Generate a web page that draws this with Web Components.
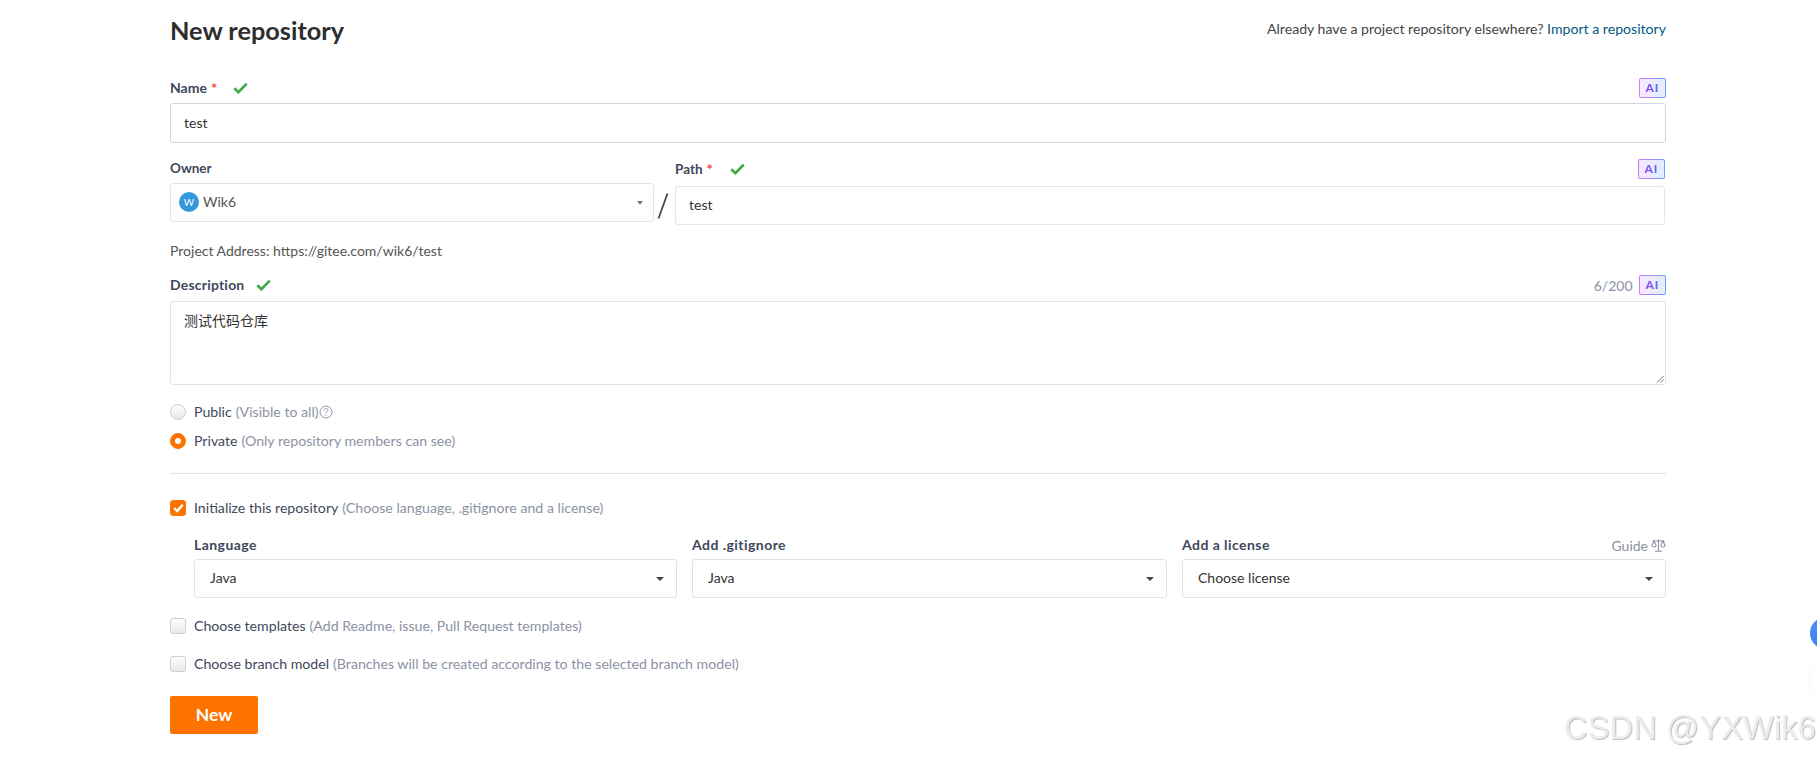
<!DOCTYPE html>
<html lang="en">
<head>
<meta charset="utf-8">
<title>New repository</title>
<style>
html,body{margin:0;padding:0;height:761px;overflow:hidden;background:#fff}
body{font-family:Lato,"Noto Sans CJK SC","Liberation Sans",sans-serif;font-size:14px;color:#40485b}
</style>
</head>
<body>
<repo-page></repo-page>
<script>
const def=(name,css,html)=>{
  customElements.define(name,class extends HTMLElement{
    constructor(){super();const r=this.attachShadow({mode:'open'});r.innerHTML=`<style>${css}</style>${typeof html==='function'?html(this):html}`;}
  });
};
const FONT='font-family:Lato,"Noto Sans CJK SC","Liberation Sans",sans-serif;';

def('ok-mark',`:host{display:inline-flex;width:15px;height:12px}svg{width:15px;height:12px;display:block}`,
`<svg viewBox="0 0 15 12"><path d="M1.3 6.2 5.4 10.2 13.7 1.6" fill="none" stroke="#3fab4a" stroke-width="2.7"/></svg>`);

def('ai-badge',`:host{display:inline-flex;align-items:center;justify-content:center;box-sizing:border-box;width:27.5px;height:20px;border:1px solid transparent;border-radius:2px;
background:linear-gradient(90deg,#f6e9ff,#e2edff) padding-box,linear-gradient(90deg,#cf7bf5,#6f9cff) border-box}
span{font:900 12px/1 Lato,"Liberation Sans",sans-serif;letter-spacing:.6px;background:linear-gradient(90deg,#9a3ff0,#4a78f0);-webkit-background-clip:text;background-clip:text;color:transparent}`,
`<span>AI</span>`);

def('field-label',`:host{display:flex;align-items:center;height:20px;font-weight:700;font-size:var(--lf,13.5px);letter-spacing:var(--ls,0);color:#40485b}
.t{margin-bottom:var(--lb,0)}
.req{color:#f5483b;margin-left:4px;font-weight:700;font-size:15px;letter-spacing:0}
ok-mark{margin-left:var(--ok-gap,15.5px)}
.r{margin-left:auto;display:flex;align-items:center;gap:6px;font-weight:400;font-size:14px;letter-spacing:0;color:#8c92a4}`,
el=>`<span class="t"><slot></slot></span>${el.hasAttribute('required')?'<span class="req">*</span>':''}${el.hasAttribute('ok')?'<ok-mark></ok-mark>':''}<span class="r"><slot name="right"></slot></span>`);

def('text-box',`:host{display:flex;align-items:center;box-sizing:border-box;height:var(--h,39px);padding:0 13px 2px;border:1px solid var(--bc,#e1e3ea);border-radius:3px;background:#fff;font-size:14px;color:#333}
:host([multi]){align-items:flex-start;padding:8px 13px 0;position:relative}
svg{position:absolute;right:1px;bottom:1px;width:8px;height:8px}`,
el=>`<slot></slot>${el.hasAttribute('multi')?'<svg viewBox="0 0 8 8"><path d="M1 7.5 7.5 1M4.5 7.5 7.5 4.5" stroke="#777" stroke-width="1"/></svg>':''}`);

def('drop-select',`:host{display:flex;align-items:center;box-sizing:border-box;height:39px;padding:0 12px 0 15px;border:1px solid #e1e3ea;border-radius:3px;background:#fff;font-size:14px;color:#333}
.t{margin-bottom:2px;display:flex;align-items:center}
.c{margin-left:auto;width:0;height:0;border:4px solid transparent;border-top:4.5px solid #444;border-bottom:0}
:host([owner]){padding:0 10px 0 8px;color:#555}
:host([owner]) .c{border-width:4.5px 3.5px 0;border-top-color:#777}`,
`<span class="t"><slot></slot></span><span class="c"></span>`);

def('user-avatar',`:host{display:inline-flex;align-items:center;justify-content:center;width:20px;height:20px;border-radius:50%;background:#3498db;color:#fff;font-size:10px;margin-right:4px}`,`<slot></slot>`);

def('choice-row',`:host{display:flex;align-items:center;height:20px;font-size:14.15px;color:#40485b}
.b{box-sizing:border-box;width:16px;height:16px;margin-right:8px;display:flex;align-items:center;justify-content:center;flex:none;border:1px solid #cfcfd8;background:linear-gradient(#fff,#e8e8ec)}
:host([radio]) .b{border-radius:50%}
:host(:not([radio])) .b{border-radius:3px}
:host([on]) .b{background:#fe7300;border-color:#fe7300}
.dot{width:6px;height:6px;border-radius:50%;background:#fff}
svg{width:11px;height:10px}
.l,.m{margin-bottom:2px}
.m{color:#8c92a4;margin-left:4px}`,
el=>`<span class="b">${el.hasAttribute('on')?(el.hasAttribute('radio')?'<span class="dot"></span>':'<svg viewBox="0 0 11 10"><path d="M1.2 5.2 4.2 8 9.8 1.8" fill="none" stroke="#fff" stroke-width="2.4"/></svg>'):''}</span><span class="l"><slot></slot></span><span class="m"><slot name="hint"></slot></span><slot name="after"></slot>`);

def('help-icon',`:host{display:inline-flex}svg{width:14px;height:14px;display:block}`,
`<svg viewBox="0 0 14 14" fill="none" stroke="#8c92a4" stroke-width="1"><circle cx="7" cy="7" r="6"/><path d="M5 5.4C5 4 6 3.4 7 3.4S9 4 9 5.2 7 6.8 7 8.3"/><path d="M7 9.6v1.2"/></svg>`);

def('scale-icon',`:host{display:inline-flex}svg{width:15px;height:13px;display:block}`,
`<svg viewBox="0 0 15 13" fill="none" stroke="#8c92a4" stroke-width="1.1"><path d="M7.5.5v11.5M4 12.3h7M1.5 2h12"/><path d="M3 2 .8 6.6a2.3 2 0 0 0 4.4 0Z"/><path d="M12 2 9.8 6.6a2.3 2 0 0 0 4.4 0Z"/></svg>`);

def('submit-button',`:host{display:flex;align-items:center;justify-content:center;box-sizing:border-box;width:88px;height:38px;padding-bottom:1px;border-radius:2px;background:#fe7300;color:#fff;font-weight:700;font-size:17.5px}`,`<slot></slot>`);

def('float-dock',`:host{position:fixed;left:1810px;top:617px;display:flex;flex-direction:column;gap:14px}
i{display:block;width:32px;height:32px;border-radius:50%}
.a{background:linear-gradient(180deg,#4a90f8,#3a7ff0)}
.b{background:#fff;box-shadow:0 0 6px rgba(0,0,0,.05)}`,`<i class="a"></i><i class="b"></i>`);

def('water-mark',`:host{position:fixed;left:1564px;top:709px;font:32.5px/38px "Liberation Sans",sans-serif;color:#ececec;text-shadow:1px 1px 1px #bdbdbd;white-space:nowrap;letter-spacing:.2px}`,`<slot></slot>`);

def('repo-page',`
:host{display:block;width:1496px;padding-left:170px;${FONT}}
header{display:flex;align-items:center;justify-content:space-between;height:60px}
h1{margin:0;font-size:25.3px;font-weight:700;color:#2e2e2e}
.imp{font-size:14.12px;color:#444;margin-top:-3px}
a{color:#005980;text-decoration:none}
.name{margin-top:18px}
.name field-label{--lf:14px;--lb:2px}
.name text-box{margin-top:5px;--h:40px;--bc:#d4d4e0}
.row{display:flex;margin-top:15px}
.own{width:484px;flex:none}
.own drop-select{margin-top:5px}
.sl{width:17px;margin-right:4px;flex:none;margin-top:31px;height:33px;display:flex;justify-content:center}
.sl svg{width:12px;height:26px;margin-top:4px}
.path{flex:1;margin-right:1px;padding-top:1px;--ok-gap:17px}
.path text-box{margin-top:7px;--bc:#e4e5eb}
.addr{margin-top:16px;height:20px;line-height:20px;font-size:14px;color:#555}
.desc{margin-top:14px}
.desc field-label{--lf:14px;--ls:.2px;--lb:2px}
.desc text-box{margin-top:6px;--h:84px}
.radios{margin-top:17px;display:flex;flex-direction:column;gap:9px}
hr{margin:22px 0 0;border:0;border-top:1px solid #e1e3ea}
.init{margin-top:24px}
.tri{margin:17px 0 0 24px;display:grid;grid-template-columns:483px 475px 1fr;column-gap:15px}
.tri field-label{--lf:14px;--ls:.45px;--lb:1px}
.tri drop-select{margin-top:4px}
.ch{margin-top:18px}
.new{margin-top:22px}
.guide{color:#8c92a4;display:flex;align-items:center;gap:3px}
`,`
<header><h1>New repository</h1><span class="imp">Already have a project repository elsewhere? <a>Import a repository</a></span></header>
<section class="name">
  <field-label required ok>Name<ai-badge slot="right"></ai-badge></field-label>
  <text-box>test</text-box>
</section>
<section class="row">
  <div class="own">
    <field-label>Owner</field-label>
    <drop-select owner><user-avatar>W</user-avatar>Wik6</drop-select>
  </div>
  <div class="sl"><svg viewBox="0 0 12 26"><path d="M10.5.5 1.5 25.5" stroke="#40485b" stroke-width="1.8" fill="none"/></svg></div>
  <div class="path">
    <field-label required ok>Path<ai-badge slot="right"></ai-badge></field-label>
    <text-box>test</text-box>
  </div>
</section>
<div class="addr">Project Address: https://gitee.com/wik6/test</div>
<section class="desc">
  <field-label ok style="--ok-gap:11.5px">Description<span slot="right">6/200</span><ai-badge slot="right"></ai-badge></field-label>
  <text-box multi>测试代码仓库</text-box>
</section>
<section class="radios">
  <choice-row radio>Public<span slot="hint">(Visible to all)</span><help-icon slot="after"></help-icon></choice-row>
  <choice-row radio on>Private<span slot="hint">(Only repository members can see)</span></choice-row>
</section>
<hr>
<choice-row class="init" on>Initialize this repository<span slot="hint">(Choose language, .gitignore and a license)</span></choice-row>
<section class="tri">
  <div><field-label>Language</field-label><drop-select>Java</drop-select></div>
  <div><field-label>Add .gitignore</field-label><drop-select>Java</drop-select></div>
  <div><field-label>Add a license<span class="guide" slot="right">Guide <scale-icon></scale-icon></span></field-label><drop-select>Choose license</drop-select></div>
</section>
<choice-row class="ch">Choose templates<span slot="hint">(Add Readme, issue, Pull Request templates)</span></choice-row>
<choice-row class="ch">Choose branch model<span slot="hint">(Branches will be created according to the selected branch model)</span></choice-row>
<submit-button class="new">New</submit-button>
<float-dock></float-dock>
<water-mark>CSDN @YXWik6</water-mark>
`);
</script>
</body>
</html>
